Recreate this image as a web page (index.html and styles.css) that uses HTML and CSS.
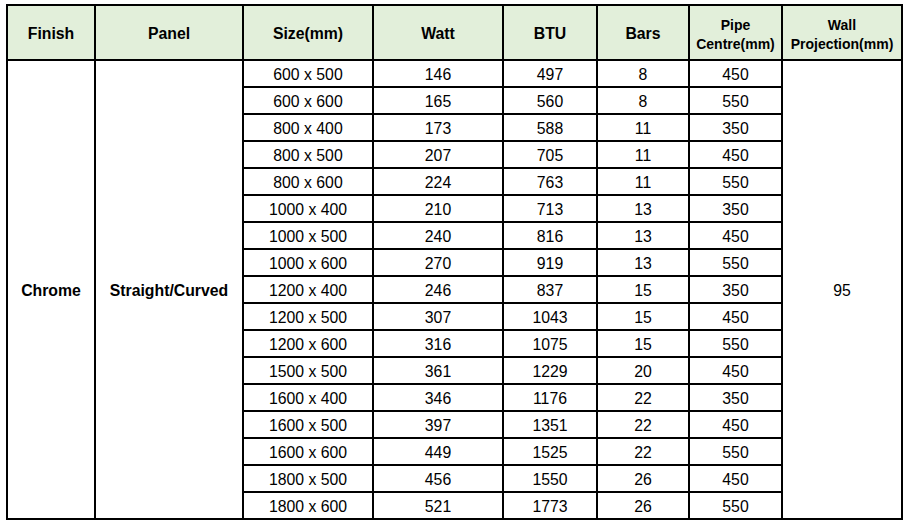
FILE: index.html
```html
<!DOCTYPE html>
<html>
<head>
<meta charset="utf-8">
<link rel="stylesheet" href="styles.css">
</head>
<body>
<table class="spec">
  <colgroup>
    <col class="c-finish"><col class="c-panel"><col class="c-size"><col class="c-watt"><col class="c-btu"><col class="c-bars"><col class="c-pipe"><col class="c-wall">
  </colgroup>
  <thead>
    <tr>
      <th>Finish</th><th>Panel</th><th>Size(mm)</th><th>Watt</th><th>BTU</th><th>Bars</th>
      <th class="small">Pipe<br>Centre(mm)</th><th class="small">Wall<br>Projection(mm)</th>
    </tr>
  </thead>
  <tbody>
    <tr><td rowspan="17" class="bold">Chrome</td><td rowspan="17" class="bold">Straight/Curved</td><td>600 x 500</td><td>146</td><td>497</td><td>8</td><td>450</td><td rowspan="17">95</td></tr>
    <tr><td>600 x 600</td><td>165</td><td>560</td><td>8</td><td>550</td></tr>
    <tr><td>800 x 400</td><td>173</td><td>588</td><td>11</td><td>350</td></tr>
    <tr><td>800 x 500</td><td>207</td><td>705</td><td>11</td><td>450</td></tr>
    <tr><td>800 x 600</td><td>224</td><td>763</td><td>11</td><td>550</td></tr>
    <tr><td>1000 x 400</td><td>210</td><td>713</td><td>13</td><td>350</td></tr>
    <tr><td>1000 x 500</td><td>240</td><td>816</td><td>13</td><td>450</td></tr>
    <tr><td>1000 x 600</td><td>270</td><td>919</td><td>13</td><td>550</td></tr>
    <tr><td>1200 x 400</td><td>246</td><td>837</td><td>15</td><td>350</td></tr>
    <tr><td>1200 x 500</td><td>307</td><td>1043</td><td>15</td><td>450</td></tr>
    <tr><td>1200 x 600</td><td>316</td><td>1075</td><td>15</td><td>550</td></tr>
    <tr><td>1500 x 500</td><td>361</td><td>1229</td><td>20</td><td>450</td></tr>
    <tr><td>1600 x 400</td><td>346</td><td>1176</td><td>22</td><td>350</td></tr>
    <tr><td>1600 x 500</td><td>397</td><td>1351</td><td>22</td><td>450</td></tr>
    <tr><td>1600 x 600</td><td>449</td><td>1525</td><td>22</td><td>550</td></tr>
    <tr><td>1800 x 500</td><td>456</td><td>1550</td><td>26</td><td>450</td></tr>
    <tr><td>1800 x 600</td><td>521</td><td>1773</td><td>26</td><td>550</td></tr>
  </tbody>
</table>
</body>
</html>
```

FILE: styles.css
```css
html, body {
  background: #ffffff;
}
body {
  margin: 4px 0 0 6px;
  font-family: "Liberation Sans", Arial, sans-serif;
  color: #000;
}
.spec {
  border-collapse: collapse;
  table-layout: fixed;
  width: 897px;
}
.c-finish { width: 88px; }
.c-panel { width: 148px; }
.c-size { width: 130px; }
.c-watt { width: 130px; }
.c-btu { width: 94px; }
.c-bars { width: 92px; }
.c-pipe { width: 93px; }
.c-wall { width: 120px; }
.spec th, .spec td {
  border: 2px solid #000;
  padding: 0;
  text-align: center;
  vertical-align: middle;
}
.spec th {
  background: #e2efda;
  height: 51px;
  padding-top: 2px;
  font-size: 15.8px;
  font-weight: bold;
}
.spec th.small {
  height: 49px;
  padding-top: 4px;
  font-size: 14px;
  line-height: 19px;
}
.spec td {
  height: 24px;
  padding-top: 1px;
  font-size: 15.8px;
  line-height: 17px;
}
.spec td.bold {
  font-weight: bold;
}
```
